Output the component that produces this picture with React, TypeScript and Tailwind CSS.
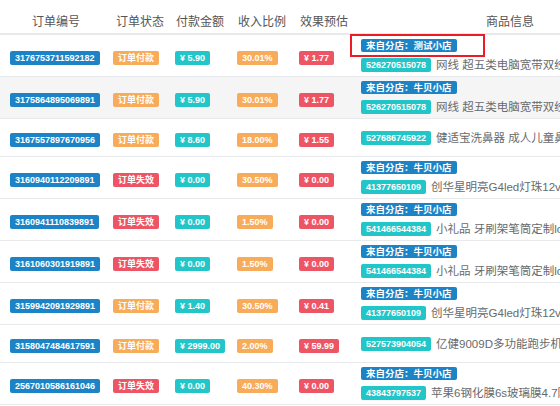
import React from "react"

type Row = {
  id: string
  paid: boolean
  amount: string
  rate: string
  effect: string
  shop?: string
  itemId: string
  title: string
}

const rows: Row[] = [
  { id: "3176753711592182", paid: true, amount: "5.90", rate: "30.01%", effect: "1.77", shop: "测试小店", itemId: "526270515078", title: "网线 超五类电脑宽带双绞线成品网络跳线" },
  { id: "3175864895069891", paid: true, amount: "5.90", rate: "30.01%", effect: "1.77", shop: "牛贝小店", itemId: "526270515078", title: "网线 超五类电脑宽带双绞线成品网络跳线" },
  { id: "3167557897670956", paid: true, amount: "8.60", rate: "18.00%", effect: "1.55", itemId: "527686745922", title: "健适宝洗鼻器 成人儿童鼻腔冲洗器" },
  { id: "3160940112209891", paid: false, amount: "0.00", rate: "30.50%", effect: "0.00", shop: "牛贝小店", itemId: "41377650109", title: "创华星明亮G4led灯珠12v插脚灯泡" },
  { id: "3160941110839891", paid: false, amount: "0.00", rate: "1.50%", effect: "0.00", shop: "牛贝小店", itemId: "541466544384", title: "小礼品 牙刷架笔筒定制logo" },
  { id: "3161060301919891", paid: false, amount: "0.00", rate: "1.50%", effect: "0.00", shop: "牛贝小店", itemId: "541466544384", title: "小礼品 牙刷架笔筒定制logo" },
  { id: "3159942091929891", paid: true, amount: "1.40", rate: "30.50%", effect: "0.41", shop: "牛贝小店", itemId: "41377650109", title: "创华星明亮G4led灯珠12v插脚灯泡" },
  { id: "3158047484617591", paid: true, amount: "2999.00", rate: "2.00%", effect: "59.99", itemId: "527573904054", title: "亿健9009D多功能跑步机家用款" },
  { id: "2567010586161046", paid: false, amount: "0.00", rate: "40.30%", effect: "0.00", shop: "牛贝小店", itemId: "43843797537", title: "苹果6钢化膜6s玻璃膜4.7防爆膜" },
]

function Label({ color, children }: { color: string; children: React.ReactNode }) {
  return (
    <span className={`inline-block rounded-[2px] px-[5px] text-[9px] font-bold leading-[14px] text-white whitespace-nowrap ${color}`}>
      {children}
    </span>
  )
}

export default function App() {
  return (
    <div
      className="relative h-[406px] w-[560px] overflow-hidden bg-white text-[#555]"
      style={{ fontFamily: '"Liberation Sans", "Noto Sans CJK SC", sans-serif' }}
    >
      {/* header */}
      <div className="flex h-[35px] w-[700px] border-b-2 border-[#e7eaec] pt-[14px] text-[12px] leading-[16px]">
        <div className="w-[112px] text-center">订单编号</div>
        <div className="w-[62px] pl-[4px]">订单状态</div>
        <div className="w-[62px] pl-[2px]">付款金额</div>
        <div className="w-[62px] pl-[2px]">收入比例</div>
        <div className="w-[62px] pl-[2px]">效果预估</div>
        <div className="w-[296px] pl-[4px] text-center">商品信息</div>
      </div>

      {rows.map((r, i) => (
        <div
          key={i}
          className={`flex w-[700px] items-center border-b border-[#e7eaec] ${r.shop ? "h-[42px]" : "h-[38px]"} ${i === 1 ? "bg-[#f5f5f5]" : ""}`}
        >
          <div className="w-[108px] pl-[10px]">
            <Label color="bg-[#1c84c6] text-[8.5px]">{r.id}</Label>
          </div>
          <div className="w-[62px] pl-[5px]">
            {r.paid ? <Label color="bg-[#f8ac59]">订单付款</Label> : <Label color="bg-[#ed5565]">订单失效</Label>}
          </div>
          <div className="w-[62px] pl-[5px]">
            <Label color="bg-[#23c6c8]">¥ {r.amount}</Label>
          </div>
          <div className="w-[62px] pl-[5px]">
            <Label color="bg-[#f8ac59]">{r.rate}</Label>
          </div>
          <div className="w-[62px] pl-[5px]">
            <Label color="bg-[#ed5565]">¥ {r.effect}</Label>
          </div>
          <div className="flex flex-col gap-[5px] pl-[5px]">
            {r.shop && (
              <div className="flex">
                <span className="inline-block rounded-[2px] bg-[#1c84c6] px-[5px] text-[9.5px] font-bold leading-[13px] text-white">
                  来自分店：{r.shop}
                </span>
              </div>
            )}
            <div className="flex items-center gap-[5px] whitespace-nowrap">
              <Label color="bg-[#23c6c8]">{r.itemId}</Label>
              <span className="text-[11.5px] leading-[16px] text-[#676a6c]">{r.title}</span>
            </div>
          </div>
        </div>
      ))}

      {/* highlight box */}
      <div className="absolute left-[350px] top-[34px] h-[23px] w-[135px] border-2 border-[#ec1c24]" />
    </div>
  )
}
